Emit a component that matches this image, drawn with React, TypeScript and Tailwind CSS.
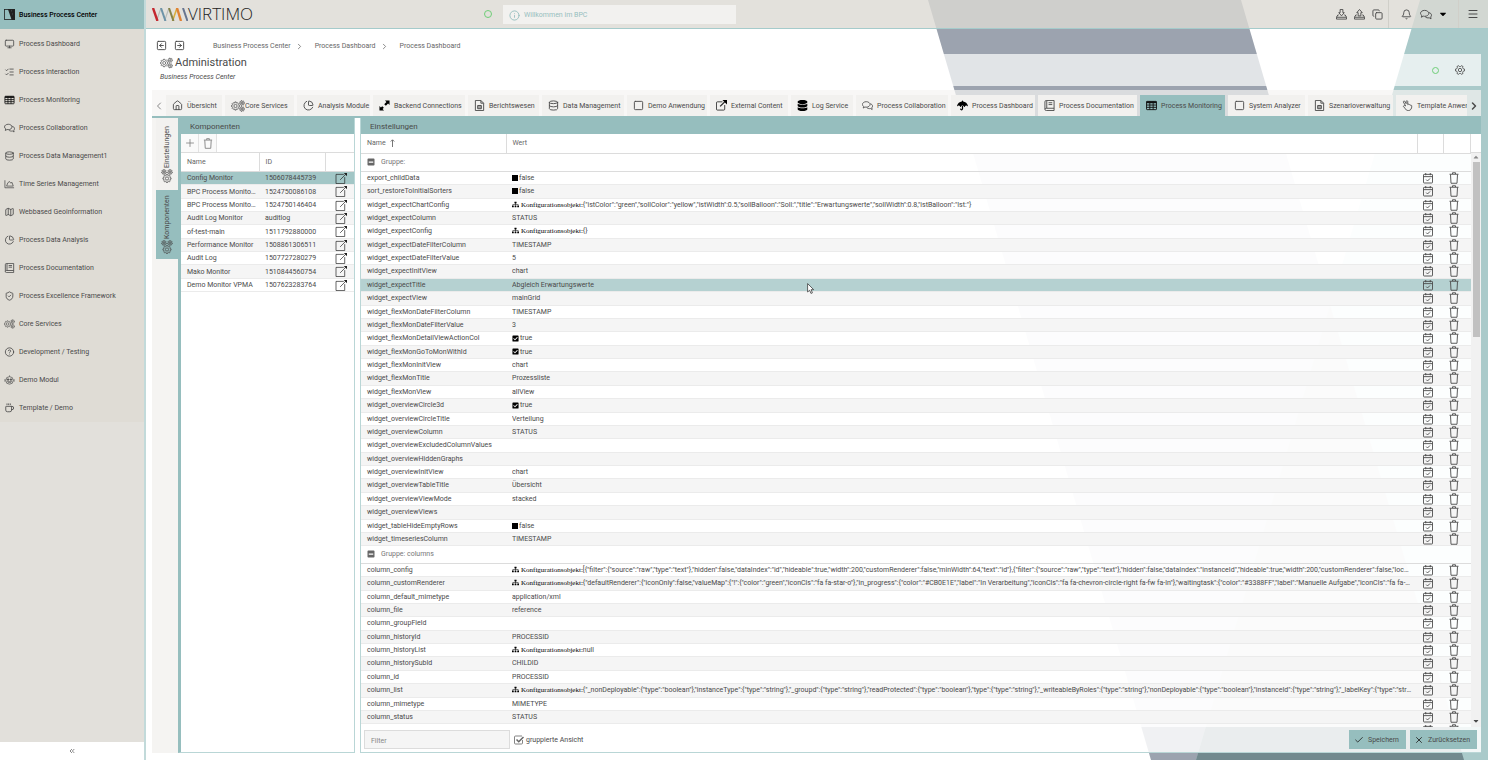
import React from "react";
import {
  Monitor, ListChecks, Database, Map as MapIcon, PieChart, ShieldCheck, CircleHelp, Coffee,
  Home, Square, Plus, Menu, Bell, Copy, ChevronLeft, ChevronRight, Check, X, Info,
  ChevronsLeft, SquareArrowLeft, SquareArrowRight,
} from "lucide-react";
import { FaSitemap, FaUmbrella, FaDatabase, FaCheckSquare, FaSquareFull, FaCaretDown, FaCaretUp, FaMinusSquare } from "react-icons/fa";

type IconProps = { className?: string };
type IconType = React.ComponentType<IconProps>;

function gearPath(cx: number, cy: number, r: number, teeth: number, depth: number) {
  const pts: string[] = [];
  const step = (Math.PI * 2) / teeth;
  for (let i = 0; i < teeth; i++) {
    const a = i * step;
    const corners: [number, number][] = [
      [-0.32, r - depth], [-0.2, r], [0.2, r], [0.32, r - depth],
    ];
    for (const [o, rad] of corners) {
      const t = a + o * step;
      pts.push(`${(cx + rad * Math.cos(t)).toFixed(2)} ${(cy + rad * Math.sin(t)).toFixed(2)}`);
    }
  }
  return `M${pts.join("L")}Z`;
}

function Gears({ className }: IconProps) {
  return (
    <svg viewBox="0 0 28 24" fill="none" stroke="currentColor" strokeWidth="1.5" strokeLinejoin="round" className={className}>
      <path d={gearPath(9, 12, 8.2, 8, 1.8)} />
      <circle cx="9" cy="12" r="3.2" />
      <path d={gearPath(22, 6, 4.8, 7, 1.3)} />
      <circle cx="22" cy="6" r="1.4" />
      <path d={gearPath(22, 18, 4.8, 7, 1.3)} />
      <circle cx="22" cy="18" r="1.4" />
    </svg>
  );
}

function Gear({ className }: IconProps) {
  return (
    <svg viewBox="0 0 24 24" fill="none" stroke="currentColor" strokeWidth="2" strokeLinejoin="round" className={className}>
      <path d={gearPath(12, 12, 11, 6, 2.6)} />
      <circle cx="12" cy="12" r="4" />
    </svg>
  );
}

function Grid({ className }: IconProps) {
  return (
    <svg viewBox="0 0 24 24" fill="none" stroke="#111" strokeWidth="2" className={className}>
      <rect x="1" y="3" width="22" height="18" rx="1.5" />
      <path d="M1 5h22" strokeWidth="4" />
      <path d="M1 11h22M1 16h22M8.3 3v18M15.6 3v18" />
    </svg>
  );
}

function Book({ className }: IconProps) {
  return (
    <svg viewBox="0 0 24 24" fill="none" stroke="currentColor" strokeWidth="2" className={className}>
      <path d="M5 1h17v22H5a3 3 0 0 1-3-3V4a3 3 0 0 1 3-3zM2 20a3 3 0 0 1 3-2h17M6 1v17M10 6h8M10 10h8" />
    </svg>
  );
}

function Doc({ className }: IconProps) {
  return (
    <svg viewBox="0 0 24 24" fill="none" stroke="currentColor" strokeWidth="2" className={className}>
      <path d="M3 1h12l6 6v16H3zM15 1v6h6" />
      <path d="M8 12h8v7H8z" fill="currentColor" fillOpacity=".45" />
    </svg>
  );
}

function Chart({ className }: IconProps) {
  return (
    <svg viewBox="0 0 24 24" fill="none" stroke="currentColor" strokeWidth="1.8" strokeLinejoin="round" className={className}>
      <path d="M1 3v18h22M5 17l3-8 4-3 3 4 3-2 3 9z" />
    </svg>
  );
}

function Robot({ className }: IconProps) {
  return (
    <svg viewBox="0 0 24 24" fill="none" stroke="currentColor" strokeWidth="1.6" className={className}>
      <ellipse cx="12" cy="13" rx="9" ry="9" />
      <path d="M12 4V1M1 10v6M23 10v6M7 16c2 3 8 3 10 0z" />
      <circle cx="8.5" cy="11" r="2" fill="currentColor" />
      <circle cx="15.5" cy="11" r="2" fill="currentColor" />
    </svg>
  );
}

function Expand({ className }: IconProps) {
  return (
    <svg viewBox="0 0 24 24" fill="#000" className={className}>
      <path d="M13 1h10v10l-3.200-3.200-4.800 4.800-3.600-3.600 4.800-4.800zM11 23H1V13l3.200 3.200 2.800-2.800 3.600 3.600-2.800 2.800z" />
    </svg>
  );
}

function External({ className }: IconProps) {
  return (
    <svg viewBox="0 0 24 24" fill="none" stroke="#222" strokeWidth="1.8" className={className}>
      <path d="M14 4H3a2 2 0 0 0-2 2v14a2 2 0 0 0 2 2h14a2 2 0 0 0 2-2v-9" />
      <path d="M9 14L19 4" strokeWidth="2.800" />
      <path d="M14 0h10v10z" fill="#000" stroke="none" />
    </svg>
  );
}

function OpenBox({ className }: IconProps) {
  return (
    <svg viewBox="0 0 26 24" fill="none" stroke="currentColor" strokeWidth="1.5" className={className}>
      <path d="M18 3H1v20h19V9M10 15L23 2" />
      <path d="M18 0h7v7z" fill="currentColor" stroke="none" />
    </svg>
  );
}

function Hand({ className }: IconProps) {
  return (
    <svg viewBox="0 0 24 24" fill="none" stroke="currentColor" strokeWidth="1.9" strokeLinejoin="round" className={className}>
      <path d="M8 13L3 4.500a1.700 1.700 0 0 1 3-1.500l3 5V3a1.800 1.800 0 0 1 3.500 0v7c1-1.500 3-1 3.200.5 1.200-1 2.800-.3 3 1 1.300-.5 2.600.3 2.600 1.800C21.300 19 19 23 14 23c-4 0-6-2-7.500-5L3 14c.5-2 2.500-2.500 5-1z" />
    </svg>
  );
}

function Trash({ className }: IconProps) {
  return (
    <svg viewBox="0 0 20 24" fill="none" stroke="currentColor" strokeWidth="1.8" strokeLinejoin="round" className={className}>
      <path d="M1 4.500h18M7 4V1.500h6V4M3 5l1 17.500h12L17 5" />
    </svg>
  );
}

function CalendarTick({ className }: IconProps) {
  return (
    <svg viewBox="0 0 22 24" fill="none" stroke="currentColor" strokeWidth="2" className={className}>
      <rect x="1" y="4" width="20" height="19" rx="1.500" />
      <path d="M1 9h20M6 1v5M16 1v5M7 15.500l3 3 5.500-5.500" />
    </svg>
  );
}

function Tray({ className, up }: IconProps & { up?: boolean }) {
  return (
    <svg viewBox="0 0 24 24" fill="none" stroke="currentColor" strokeWidth="2" strokeLinejoin="round" className={className}>
      <path d={up ? "M12 1l6 7h-3v7H9V8H6z" : "M12 15L6 8h3V1h6v7h3z"} />
      <path d="M6 13H4l-3 5v4h22v-4l-3-5h-2M1 18h22" />
    </svg>
  );
}
const TrayUp = (p: IconProps) => <Tray {...p} up />;

function Chats({ className }: IconProps) {
  return (
    <svg viewBox="0 0 26 24" fill="none" stroke="currentColor" strokeWidth="2" strokeLinejoin="round" className={className}>
      <path d="M10 3c5 0 9 2.800 9 6.500S15 16 10 16c-1 0-2-.1-3-.4L3 18l.800-4C2 12.800 1 11.200 1 9.500 1 5.800 5 3 10 3z" />
      <path d="M19.500 8c3.200.6 5.500 2.700 5.500 5.500 0 1.500-.7 2.800-1.800 3.800l.8 4.200-4-2.300c-3.500.7-7-.2-8.800-2.500" />
    </svg>
  );
}

function SortArrow({ className }: IconProps) {
  return (
    <svg viewBox="0 0 10 16" fill="none" stroke="currentColor" strokeWidth="1.800" className={className}>
      <path d="M5 16V2M1.500 5L5 1.500 8.500 5" />
    </svg>
  );
}

const NAV: [IconType, string][] = [
  [Monitor, "Process Dashboard"],
  [ListChecks, "Process Interaction"],
  [Grid, "Process Monitoring"],
  [Chats, "Process Collaboration"],
  [Database, "Process Data Management1"],
  [Chart, "Time Series Management"],
  [MapIcon, "Webbased Geoinformation"],
  [PieChart, "Process Data Analysis"],
  [Book, "Process Documentation"],
  [ShieldCheck, "Process Excellence Framework"],
  [Gears, "Core Services"],
  [CircleHelp, "Development / Testing"],
  [Robot, "Demo Modul"],
  [Coffee, "Template / Demo"],
];

const TABS: [IconType, string, string][] = [
  [Home, "Übersicht", "w-14"],
  [Gears, "Core Services", "w-[69px]"],
  [PieChart, "Analysis Module", "w-[73px]"],
  [Expand, "Backend Connections", "w-[92px]"],
  [Doc, "Berichtswesen", "w-[71px]"],
  [Database, "Data Management", "w-[82px]"],
  [Square, "Demo Anwendung", "w-20"],
  [External, "External Content", "w-[78px]"],
  [FaDatabase, "Log Service", "w-[62px]"],
  [Chats, "Process Collaboration", "w-[92px]"],
  [FaUmbrella, "Process Dashboard", "w-[84px]"],
  [Book, "Process Documentation", "w-[99px]"],
  [Grid, "Process Monitoring", "w-[85px]"],
  [Square, "System Analyzer", "w-[77px]"],
  [Doc, "Szenarioverwaltung", "w-[85px]"],
  [Hand, "Template Anwendung", "w-[92px]"],
];

const COMPONENTS: [string, string][] = [
  ["Config Monitor", "1506078445739"],
  ["BPC Process Monitoring", "1524750086108"],
  ["BPC Process Monitoring", "1524750146404"],
  ["Audit Log Monitor", "auditlog"],
  ["of-test-main", "1511792880000"],
  ["Performance Monitor", "1508861306511"],
  ["Audit Log", "1507727280279"],
  ["Mako Monitor", "1510844560754"],
  ["Demo Monitor VPMA", "1507623283764"],
];

type Value = string | boolean | { json: string };

const GENERAL: [string, Value][] = [
  ["export_childData", false],
  ["sort_restoreToInitialSorters", false],
  ["widget_expectChartConfig", { json: '{"istColor":"green","sollColor":"yellow","istWidth":0.5,"sollBalloon":"Soll:","title":"Erwartungswerte","sollWidth":0.8,"istBalloon":"Ist:"}' }],
  ["widget_expectColumn", "STATUS"],
  ["widget_expectConfig", { json: "{}" }],
  ["widget_expectDateFilterColumn", "TIMESTAMP"],
  ["widget_expectDateFilterValue", "5"],
  ["widget_expectInitView", "chart"],
  ["widget_expectTitle", "Abgleich Erwartungswerte"],
  ["widget_expectView", "mainGrid"],
  ["widget_flexMonDateFilterColumn", "TIMESTAMP"],
  ["widget_flexMonDateFilterValue", "3"],
  ["widget_flexMonDetailViewActionCol", true],
  ["widget_flexMonGoToMonWithId", true],
  ["widget_flexMonInitView", "chart"],
  ["widget_flexMonTitle", "Prozessliste"],
  ["widget_flexMonView", "allView"],
  ["widget_overviewCircle3d", true],
  ["widget_overviewCircleTitle", "Verteilung"],
  ["widget_overviewColumn", "STATUS"],
  ["widget_overviewExcludedColumnValues", ""],
  ["widget_overviewHiddenGraphs", ""],
  ["widget_overviewInitView", "chart"],
  ["widget_overviewTableTitle", "Übersicht"],
  ["widget_overviewViewMode", "stacked"],
  ["widget_overviewViews", ""],
  ["widget_tableHideEmptyRows", false],
  ["widget_timeseriesColumn", "TIMESTAMP"],
];

const COLUMNS: [string, Value][] = [
  ["column_config", { json: '[{"filter":{"source":"raw","type":"text"},"hidden":false,"dataIndex":"id","hideable":true,"width":200,"customRenderer":false,"minWidth":64,"text":"id"},{"filter":{"source":"raw","type":"text"},"hidden":false,"dataIndex":"instanceId","hideable":true,"width":200,"customRenderer":false,"localize":false,"minWidth":64}]' }],
  ["column_customRenderer", { json: '{"defaultRenderer":{"iconOnly":false,"valueMap":{"!":{"color":"green","iconCls":"fa fa-star-o"},"in_progress":{"color":"#CB0E1E","label":"In Verarbeitung","iconCls":"fa fa-chevron-circle-right fa-fw fa-ln"},"waitingtask":{"color":"#3388FF","label":"Manuelle Aufgabe","iconCls":"fa fa-history fa-fw fa-ln"}}}}' }],
  ["column_default_mimetype", "application/xml"],
  ["column_file", "reference"],
  ["column_groupField", ""],
  ["column_historyId", "PROCESSID"],
  ["column_historyList", { json: "null" }],
  ["column_historySubId", "CHILDID"],
  ["column_id", "PROCESSID"],
  ["column_list", { json: '{"_nonDeployable":{"type":"boolean"},"instanceType":{"type":"string"},"_groupd":{"type":"string"},"readProtected":{"type":"boolean"},"type":{"type":"string"},"_writeableByRoles":{"type":"string"},"nonDeployable":{"type":"boolean"},"instanceId":{"type":"string"},"_labelKey":{"type":"string"},"_name":{"type":"string"}}' }],
  ["column_mimetype", "MIMETYPE"],
  ["column_status", "STATUS"],
  ["column_timestamp", ""],
];

const ROW = "h-[13px] border-b border-[#ebebeb] nth-[8n]:h-[14px] nth-[8n+2]:h-[14px] nth-[8n+5]:h-[14px] ";

function ValueView({ value }: { value: Value }) {
  if (typeof value === "boolean") {
    return (
      <div className="flex items-center gap-px">
        {value ? <FaCheckSquare className="size-[7px] text-black" /> : <FaSquareFull className="size-1.5 text-black" />}
        {String(value)}
      </div>
    );
  }
  if (typeof value === "string") return <div className="truncate">{value}</div>;
  return (
    <div className="truncate">
      <FaSitemap className="mr-0.5 inline size-[7px] align-[-1px] text-black" />
      <span className="font-['Liberation_Serif',serif] text-[7px] text-black">Konfigurationsobjekt:</span>
      {value.json}
    </div>
  );
}

function Group({ title, rows }: { title: string; rows: [string, Value][] }) {
  return (
    <>
      <tbody>
        <tr className="h-[18px] border-b border-[#dcdcdc] bg-white/97">
          <th colSpan={4} scope="colgroup" className="px-1.5 text-left font-normal text-[#777]">
            <div className="flex items-center gap-1.5">
              <button aria-label="Gruppe einklappen"><FaMinusSquare className="size-2 text-[#666]" /></button>
              {title}
            </div>
          </th>
        </tr>
      </tbody>
      <tbody>
        {rows.map(([name, value]) => {
          const selected = name === "widget_expectTitle";
          return (
            <tr key={name} className={ROW + (selected ? "bg-[#b5d1d1]" : "odd:bg-white/97 even:bg-[#f5f5f5]")}>
              <td className="truncate px-1.5">{name}</td>
              <td className="relative px-1.5">
                <ValueView value={value} />
                {selected && (
                  <svg viewBox="0 0 12 19" className="absolute top-1 left-[301px] z-10 h-[11px] w-[7px]">
                    <path d="M1 1v14.500l3.500-3 2.300 5.500 2.500-1-2.300-5.500H11.500z" fill="#fff" stroke="#333" strokeWidth="1.300" />
                  </svg>
                )}
              </td>
              <td>
                <button aria-label="Standardwert" className="ml-[5px] block"><CalendarTick className="h-3 w-2.5" /></button>
              </td>
              <td>
                <button aria-label="Löschen" className="ml-[5px] block"><Trash className="h-3 w-2.5" /></button>
              </td>
            </tr>
          );
        })}
      </tbody>
    </>
  );
}

function Logo() {
  return (
    <div className="flex items-center text-[17px] leading-5 font-light text-[#222] font-['Open_Sans',sans-serif]">
      <svg viewBox="0 0 36 13" className="h-[13px] w-9" fill="none" strokeWidth="2">
        <path d="M4.500 13L9 0M12.500 13L17 0" stroke="#b9bdbb" strokeWidth="1.200" />
        <path d="M20.500 13L25 0" stroke="#d9ae3c" strokeWidth="1.600" />
        <path d="M1 0l4.500 13" stroke="#c4262e" strokeWidth="2.400" />
        <path d="M9 0l4.500 13" stroke="#6d93a8" />
        <path d="M17 0l4.500 13" stroke="#85834a" />
        <path d="M25 0l4 13" stroke="#e08233" strokeWidth="2.400" />
        <path d="M31 0l4.500 13" stroke="#66748f" />
      </svg>
      VIRTIMO
    </div>
  );
}

function Backdrop() {
  return (
    <svg viewBox="0 0 1488 760" preserveAspectRatio="none" className="absolute inset-0 -z-10 size-full">
      <path d="M928 0h313l223 760h-313z" fill="#9ca3af" />
      <path d="M1420 0h68v760h-292z" fill="#aacaca" />
      <path d="M1330 305l134 455h-268z" fill="#72898e" />
    </svg>
  );
}

export default function App() {
  return (
    <div className="relative isolate flex h-screen overflow-hidden bg-white text-[7px] leading-[10px] text-[#4a4a4a] font-['Roboto',sans-serif]">
      <Backdrop />

      <aside className="flex w-[146px] shrink-0 flex-col border-r-2 border-[#c2dada] bg-[#e2e0db]">
        <div className="flex h-[29px] shrink-0 items-center gap-1 bg-[#96bebe] px-1 font-medium text-black">
          <svg viewBox="0 0 20 20" className="size-[11px]">
            <rect x="1" y="1" width="18" height="18" fill="none" stroke="#222" strokeWidth="1.500" />
            <path d="M7 0h6l5 20h2V0z" fill="#222" />
            <path d="M7 0l7 20h6V0h-3v14L13 0z" fill="#222" />
          </svg>
          Business Process Center
        </div>
        <nav className="bg-[#dfdcd5] pt-px">
          {NAV.map(([Icon, label]) => (
            <a key={label} href="#" className="flex h-7 items-center gap-1 px-1">
              <Icon className="h-2.5 w-[11px]" />
              {label}
            </a>
          ))}
        </nav>
        <button aria-label="Menü einklappen" className="mt-auto flex h-[18px] shrink-0 items-center justify-center bg-white">
          <ChevronsLeft className="size-2" />
        </button>
      </aside>

      <div className="flex min-w-0 flex-1 flex-col">
        <header className="flex h-[29px] shrink-0 items-center border-b border-[#a5cbcb] bg-[#dcdad3]/80 pl-1.5">
          <Logo />
          <span className="ml-auto size-2 rounded-full border border-[#6fce78]" />
          <div className="mr-[600px] ml-[11px] flex h-[19px] w-[233px] items-center gap-1 bg-[#f2f1ef] px-1.5 pt-0.5 text-[#96bebe]">
            <Info className="size-[11px]" />
            Willkommen im BPC
          </div>
          <div className="flex h-full items-center gap-[7px] border-r border-[#d0cfc9] pr-[5px]">
            <button aria-label="Herunterladen"><Tray className="size-[11px]" /></button>
            <button aria-label="Hochladen"><TrayUp className="size-[11px]" /></button>
            <button aria-label="Kopieren"><Copy className="size-[11px]" /></button>
          </div>
          <div className="flex h-full w-[70px] items-center gap-2 border-r border-[#d0cfc9] pl-3">
            <button aria-label="Benachrichtigungen"><Bell className="size-[11px]" /></button>
            <button aria-label="Nachrichten" className="flex items-center gap-1.5">
              <Chats className="h-[11px] w-3" />
              <FaCaretDown className="size-2.5 text-black" />
            </button>
          </div>
          <button aria-label="Menü" className="pr-[9px] pl-2"><Menu className="size-3" /></button>
        </header>

        <div className="flex h-[25px] shrink-0 items-end gap-[7px] pb-[3px] pl-2.5 text-[#666]">
          <button aria-label="Zurück"><SquareArrowLeft className="size-[11px] text-[#444]" /></button>
          <button aria-label="Vor"><SquareArrowRight className="size-[11px] text-[#444]" /></button>
          <nav aria-label="Brotkrumen" className="ml-[21px] flex items-center gap-1">
            <a href="#">Business Process Center</a>
            <ChevronRight className="size-[9px]" />
            <a href="#" className="ml-[7px]">Process Dashboard</a>
            <ChevronRight className="size-[9px]" />
            <a href="#" className="ml-[7px]">Process Dashboard</a>
          </nav>
        </div>

        <div className="mr-[7px] ml-1.5 flex min-h-0 flex-1 flex-col pb-[7px]">
          <div className="mb-1 flex h-8 shrink-0 items-center justify-between bg-white/70 px-2">
            <div>
              <h1 className="flex items-center gap-0.5 text-[11px] leading-4">
                <Gears className="h-3 w-[13px]" />
                Administration
              </h1>
              <p className="pb-0.5 leading-3 italic">Business Process Center</p>
            </div>
            <div className="flex items-center gap-4 pr-2">
              <span className="size-[7px] rounded-full border border-[#6fce78]" />
              <button aria-label="Einstellungen"><Gear className="size-2.5" /></button>
            </div>
          </div>

          <div className="flex h-7 shrink-0 items-end border-b-2 border-[#96bebe] bg-[#f5f4f2]/70">
            <button aria-label="Nach links" className="flex h-[21px] w-3.5 shrink-0 items-center justify-center text-[#888]">
              <ChevronLeft className="size-3" />
            </button>
            <div role="tablist" className="flex min-w-0 flex-1 gap-[3px] overflow-hidden">
              {TABS.map(([Icon, label, width]) => (
                <button
                  key={label}
                  role="tab"
                  aria-selected={label === "Process Monitoring"}
                  className={
                    "flex h-[21px] shrink-0 items-center gap-1 overflow-hidden pl-1.5 whitespace-nowrap " + width +
                    (label === "Process Monitoring" ? " bg-[#96bebe]" : " bg-[#f2f1ef]")
                  }
                >
                  <Icon
                    className={
                      label === "Core Services" ? "-mr-1 h-3 w-3.5 shrink-0"
                        : label === "Log Service" || label === "Process Dashboard" ? "size-[11px] shrink-0 text-black"
                        : "size-[11px] shrink-0"
                    }
                  />
                  {label}
                </button>
              ))}
            </div>
            <button aria-label="Nach rechts" className="flex h-[21px] w-3.5 shrink-0 items-center justify-center">
              <ChevronRight className="size-3 stroke-3" />
            </button>
          </div>

          <div className="flex min-h-0 flex-1">
            <div role="tablist" className="flex w-[26px] shrink-0 flex-col items-end bg-[#f5f4f2]">
              <button role="tab" className="flex h-[72px] w-[22px] rotate-180 items-center justify-center gap-0.5 bg-[#f2f1ef] [writing-mode:vertical-rl]">
                <Gears className="h-3 w-3.5 rotate-90" />
                Einstellungen
              </button>
              <button role="tab" aria-selected className="flex h-[69px] w-[22px] rotate-180 items-center justify-center gap-0.5 bg-[#96bebe] [writing-mode:vertical-rl]">
                <Gears className="h-3 w-3.5 rotate-90" />
                Komponenten
              </button>
            </div>

            <section className="flex w-[177px] shrink-0 flex-col border-r border-b border-l-3 border-[#96bebe] border-r-[#b9d6d6] border-b-[#b9d6d6] bg-white">
              <h2 className="h-4 shrink-0 bg-[#96bebe] pl-[9px] text-[8px] leading-[17px]">Komponenten</h2>
              <div className="flex h-[18px] shrink-0 text-[#777]">
                <button aria-label="Hinzufügen" className="flex w-[18px] items-center justify-center border-r border-[#e2e2e2] bg-[#fafafa]"><Plus className="size-3 stroke-[1.5]" /></button>
                <button aria-label="Löschen" className="flex w-[18px] items-center justify-center border-r border-[#e2e2e2] bg-[#fafafa]"><Trash className="h-[11px] w-2.5" /></button>
              </div>
              <table className="w-full table-fixed border-collapse text-left">
                <colgroup>
                  <col className="w-[78px]" />
                  <col className="w-[66px]" />
                  <col />
                </colgroup>
                <thead>
                  <tr className="h-[19px] border-y border-[#dcdcdc] text-[#666]">
                    <th className="border-r border-[#dcdcdc] px-1.5 font-normal">Name</th>
                    <th className="border-r border-[#dcdcdc] px-1.5 font-normal">ID</th>
                    <th />
                  </tr>
                </thead>
                <tbody>
                  {COMPONENTS.map(([name, id], i) => (
                    <tr key={id} className={ROW + (i === 0 ? "bg-[#a2c6c6]" : "odd:bg-white even:bg-[#f5f5f5]")}>
                      <td className="truncate pr-[3px] pl-1.5">{name}</td>
                      <td className="px-1.5">{id}</td>
                      <td><button aria-label="Öffnen" className="ml-2.5 block"><OpenBox className="h-[11px] w-[13px] text-[#222]" /></button></td>
                    </tr>
                  ))}
                </tbody>
              </table>
            </section>

            <div className="w-[5px] shrink-0 bg-white" />

            <section className="flex min-w-0 flex-1 flex-col border-b border-l border-[#b9d6d6]">
              <h2 className="h-4 shrink-0 bg-[#96bebe] pl-[9px] text-[8px] leading-[17px]">Einstellungen</h2>
              <div className="flex min-h-0 flex-1 overflow-hidden">
                <div className="min-w-0 flex-1 overflow-hidden">
                  <table className="w-full table-fixed border-collapse text-left">
                    <colgroup>
                      <col className="w-[145px]" />
                      <col />
                      <col className="w-[26px]" />
                      <col className="w-[27px]" />
                    </colgroup>
                    <thead>
                      <tr className="h-[19px] border-b border-[#dcdcdc] bg-white text-[#666]">
                        <th className="border-r border-[#dcdcdc] px-1.5 font-normal">
                          <span className="flex items-center gap-1">Name <SortArrow className="h-2 w-[5px]" /></span>
                        </th>
                        <th className="border-r border-[#dcdcdc] px-1.5 font-normal">Wert</th>
                        <th className="border-r border-[#dcdcdc]" />
                        <th className="border-r border-[#dcdcdc]" />
                      </tr>
                    </thead>
                    <Group title="Gruppe:" rows={GENERAL} />
                    <Group title="Gruppe: columns" rows={COLUMNS} />
                  </table>
                </div>
                <div className="flex w-2.5 shrink-0 flex-col items-center bg-[#f1f1f1]">
                  <div className="h-[19px] w-full shrink-0 border-b border-[#dcdcdc] bg-white" />
                  <FaCaretUp className="size-2 shrink-0 text-[#888]" />
                  <div className="mt-px h-[175px] w-[7px] shrink-0 bg-[#c1c1c1]" />
                  <FaCaretDown className="mt-auto mb-0.5 size-2 shrink-0" />
                </div>
              </div>
              <div className="flex h-[25px] shrink-0 items-center bg-white/85 pr-1 pl-[3px]">
                <input
                  aria-label="Filter"
                  placeholder="Filter"
                  className="h-[19px] w-[146px] border border-[#dcdcdc] bg-[#f5f5f5] px-1.5 pt-0.5 placeholder:text-[#888]"
                />
                <label className="ml-1 flex items-center gap-0.5">
                  <span className="relative size-2.5">
                    <input type="checkbox" defaultChecked className="absolute inset-0 size-2.5 appearance-none" />
                    <svg viewBox="0 0 20 20" fill="none" stroke="#666" strokeWidth="1.600" className="pointer-events-none absolute inset-0 size-2.5">
                      <path d="M17 10v6a2 2 0 0 1-2 2H3a2 2 0 0 1-2-2V4a2 2 0 0 1 2-2h13" />
                      <path d="M5 9l4.500 4.500L19 4" strokeWidth="3" />
                    </svg>
                  </span>
                  gruppierte Ansicht
                </label>
                <button className="ml-auto flex h-[19px] w-[57px] items-center gap-1 bg-[#96bebe] pl-[5px]">
                  <Check className="size-2.5 text-[#222]" />
                  Speichern
                </button>
                <button className="ml-1 flex h-[19px] w-[67px] items-center gap-1 bg-[#96bebe] pl-1">
                  <X className="size-2.5 text-[#222]" />
                  Zurücksetzen
                </button>
              </div>
            </section>
          </div>
        </div>
      </div>
    </div>
  );
}
